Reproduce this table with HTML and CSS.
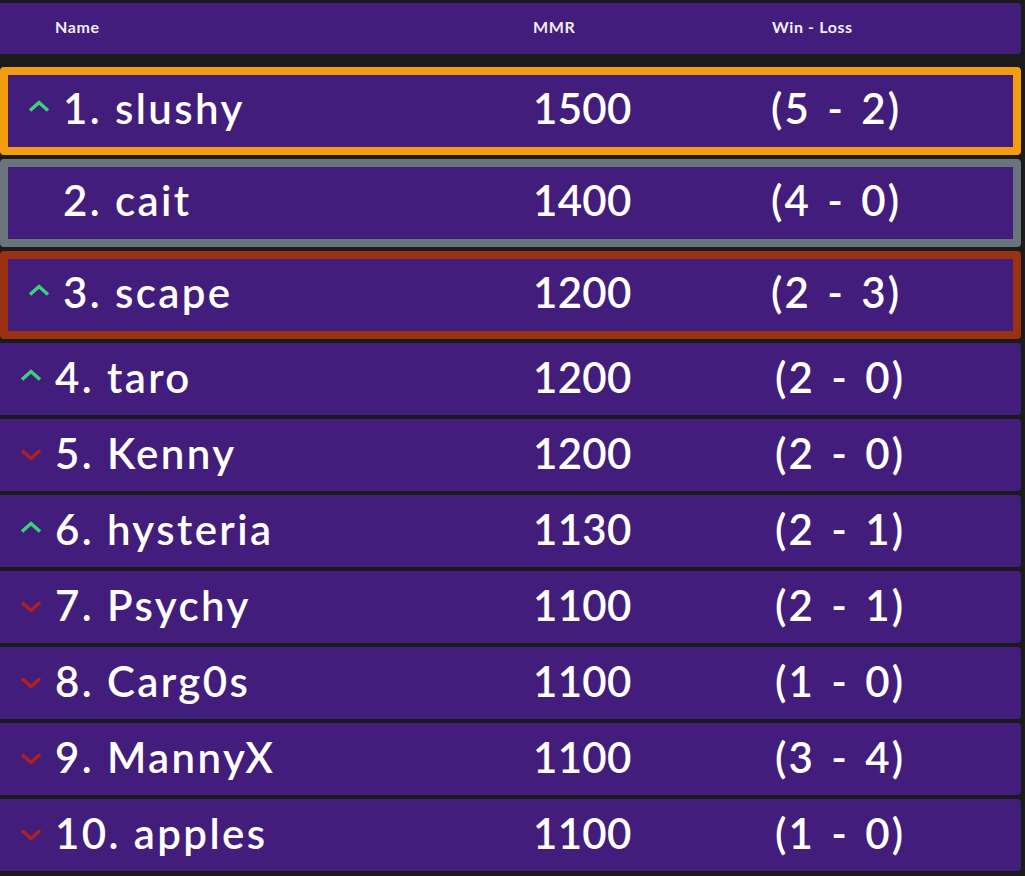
FILE: index.html
```html
<!DOCTYPE html>
<html lang="en">
<head>
<meta charset="utf-8">
<title>Leaderboard</title>
<link rel="stylesheet" href="styles.css">
</head>
<body>
<div class="board">
  <div class="head">
    <span class="head-name">Name</span>
    <span class="head-mmr">MMR</span>
    <span class="head-wl">Win - Loss</span>
  </div>

  <div class="row podium gold">
    <span class="trend"><svg class="up" viewBox="0 0 22 12"><polyline points="2,10.5 11,2.5 20,10.5"/></svg></span>
    <span class="name">1. slushy</span><span class="mmr">1500</span><span class="wl">(5 - 2)</span>
  </div>
  <div class="row podium silver">
    <span class="trend"></span>
    <span class="name">2. cait</span><span class="mmr">1400</span><span class="wl">(4 - 0)</span>
  </div>
  <div class="row podium bronze">
    <span class="trend"><svg class="up" viewBox="0 0 22 12"><polyline points="2,10.5 11,2.5 20,10.5"/></svg></span>
    <span class="name">3. scape</span><span class="mmr">1200</span><span class="wl">(2 - 3)</span>
  </div>
  <div class="row">
    <span class="trend"><svg class="up" viewBox="0 0 22 12"><polyline points="2,10.5 11,2.5 20,10.5"/></svg></span>
    <span class="name">4. taro</span><span class="mmr">1200</span><span class="wl">(2 - 0)</span>
  </div>
  <div class="row">
    <span class="trend"><svg class="down" viewBox="0 0 22 12"><polyline points="2,1.5 11,9.5 20,1.5"/></svg></span>
    <span class="name">5. Kenny</span><span class="mmr">1200</span><span class="wl">(2 - 0)</span>
  </div>
  <div class="row">
    <span class="trend"><svg class="up" viewBox="0 0 22 12"><polyline points="2,10.5 11,2.5 20,10.5"/></svg></span>
    <span class="name">6. hysteria</span><span class="mmr">1130</span><span class="wl">(2 - 1)</span>
  </div>
  <div class="row">
    <span class="trend"><svg class="down" viewBox="0 0 22 12"><polyline points="2,1.5 11,9.5 20,1.5"/></svg></span>
    <span class="name">7. Psychy</span><span class="mmr">1100</span><span class="wl">(2 - 1)</span>
  </div>
  <div class="row">
    <span class="trend"><svg class="down" viewBox="0 0 22 12"><polyline points="2,1.5 11,9.5 20,1.5"/></svg></span>
    <span class="name">8. Carg0s</span><span class="mmr">1100</span><span class="wl">(1 - 0)</span>
  </div>
  <div class="row">
    <span class="trend"><svg class="down" viewBox="0 0 22 12"><polyline points="2,1.5 11,9.5 20,1.5"/></svg></span>
    <span class="name">9. MannyX</span><span class="mmr">1100</span><span class="wl">(3 - 4)</span>
  </div>
  <div class="row">
    <span class="trend"><svg class="down" viewBox="0 0 22 12"><polyline points="2,1.5 11,9.5 20,1.5"/></svg></span>
    <span class="name">10. apples</span><span class="mmr">1100</span><span class="wl">(1 - 0)</span>
  </div>
</div>
</body>
</html>
```

FILE: styles.css
```css
* { box-sizing: border-box; }

html, body {
  margin: 0;
  padding: 0;
  background: #1b1b1c;
  font-family: Lato, "Open Sans", sans-serif;
  color: #ffffff;
}

.board {
  width: 1021px;
  padding-top: 3px;
  display: flex;
  flex-direction: column;
  gap: 4px;
}

.head {
  height: 51px;
  margin-bottom: 9px;
  background: #421d7b;
  border-radius: 0 4px 4px 0;
  display: grid;
  grid-template-columns: 478px 239px 1fr;
  align-items: center;
  padding-left: 55px;
  padding-bottom: 4px;
  font-size: 16px;
  font-weight: 700;
  letter-spacing: 0.6px;
  color: #f2eef8;
}

.row {
  height: 72px;
  background: #421d7b;
  border-radius: 0 4px 4px 0;
  display: grid;
  grid-template-columns: 35px 478px 242px 1fr;
  align-items: center;
  padding-left: 20px;
  padding-bottom: 4px;
  font-size: 42px;
  font-weight: 600;
  line-height: 1;
  white-space: nowrap;
}

.row.podium {
  height: 88px;
  border: 8px solid #6b737d;
  border-radius: 4px;
  grid-template-columns: 35px 470px 238px 1fr;
  padding-bottom: 6px;
}

.row.gold { border-color: #f39c0f; }
.row.silver { border-color: #6b737d; }
.row.bronze { border-color: #9a3113; }

.name { letter-spacing: 2.4px; }
.mmr { letter-spacing: 0.3px; }
.wl { letter-spacing: 2px; word-spacing: 4px; }

.trend {
  display: flex;
  align-items: center;
  height: 100%;
  padding-bottom: 4px;
}

.trend svg {
  width: 22px;
  height: 12px;
  display: block;
  fill: none;
  stroke-width: 3.5;
}

.trend svg.up { stroke: #3ccf7e; }
.trend svg.down { stroke: #b21f20; margin-top: 8px; }
```
